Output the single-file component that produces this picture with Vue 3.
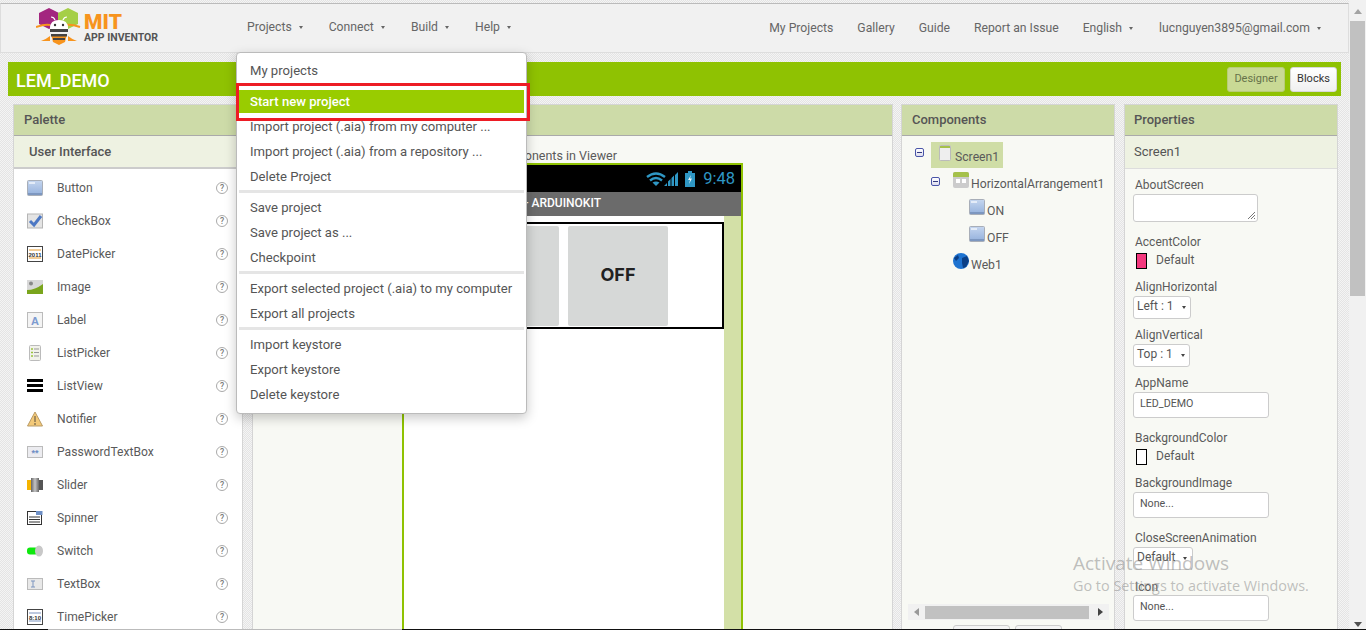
<script setup>
const nav = ['Projects', 'Connect', 'Build', 'Help']
const palette = ['Button','CheckBox','DatePicker','Image','Label','ListPicker','ListView','Notifier','PasswordTextBox','Slider','Spinner','Switch','TextBox','TimePicker']
const menu = [
  [{t:'My projects'},{t:'Start new project',on:true},{t:'Import project (.aia) from my computer ...'},{t:'Import project (.aia) from a repository ...'},{t:'Delete Project'}],
  [{t:'Save project'},{t:'Save project as ...'},{t:'Checkpoint'}],
  [{t:'Export selected project (.aia) to my computer'},{t:'Export all projects'}],
  [{t:'Import keystore'},{t:'Export keystore'},{t:'Delete keystore'}],
]
</script>

<template>
  <div class="page">
    <svg class="defs" width="0" height="0">
      <defs>
        <linearGradient id="btnGrad" x1="0" y1="0" x2="0" y2="1"><stop offset="0" stop-color="#c5d6ef"/><stop offset="1" stop-color="#93b0dc"/></linearGradient>
        <linearGradient id="sliderGrad" x1="0" y1="0" x2="1" y2="0"><stop offset="0" stop-color="#666"/><stop offset=".5" stop-color="#c4c4c4"/><stop offset="1" stop-color="#666"/></linearGradient>
      </defs>
    </svg>
    <div class="main">
      <nav class="nav">
        <div class="logo">
          <svg width="46" height="40" viewBox="0 0 46 40">
            <path d="M13 1l10 5v11l-10 5-10-5V6z" fill="#a3267f"/>
            <path d="M32 1l10 5v11l-10 5-10-5V6z" fill="#a5cf47"/>
            <path d="M0 20q9-3 14-2M44 20q-9-3-14-2" stroke="#f7941e" stroke-width="2" fill="none"/>
            <path d="M14 29q-5 4-9 5h9zM32 29q5 4 9 5h-9z" fill="#f7941e"/>
            <path d="M15 27h16l-2 8-6 3-6-3z" fill="#f7941e"/>
            <path d="M14 21q0-8 9-8t9 8v2H14z" fill="#fff"/>
            <path d="M14 22h18v3H14zM15 27h16v2.500H15zM17 31h12v2H17z" fill="#444"/>
            <circle cx="19" cy="18" r="1.200" fill="#333"/><circle cx="27" cy="18" r="1.200" fill="#333"/>
            <path d="M19 13q-1-3-4-3M27 13q1-3 4-3" stroke="#fff" stroke-width="1.200" fill="none"/>
          </svg>
          <div class="logotext"><span class="mit">MIT</span><span class="ai">APP INVENTOR</span></div>
        </div>
        <div class="navleft"><span v-for="n in nav" :key="n" class="navitem">{{ n }}<i class="caret"></i></span></div>
        <div class="navright">
          <span>My Projects</span><span>Gallery</span><span>Guide</span><span>Report an Issue</span>
          <span>English<i class="caret"></i></span>
          <span class="email">lucnguyen3895@gmail.com<i class="caret"></i></span>
        </div>
      </nav>

      <header class="bar">
        <strong>LEM_DEMO</strong>
        <div class="tabs"><span class="tab off">Designer</span><span class="tab on">Blocks</span></div>
      </header>

      <div class="work">
        <section class="panel palette">
          <h3>Palette</h3>
          <div class="sub">User Interface</div>
          <ul class="plist">
            <li v-for="p in palette" :key="p">
              <svg class="pi" width="16" height="16" viewBox="0 0 16 16">
                <template v-if="p==='Button'"><rect x=".5" y=".5" width="15" height="15" rx="1" fill="url(#btnGrad)" stroke="#a8aeb8"/><rect x="1" y="13" width="14" height="2" fill="#7d97c0"/><rect x="2" y="2" width="6" height="2" fill="#e4ecf8"/></template>
                <template v-else-if="p==='CheckBox'"><rect x=".5" y="1" width="15" height="14" fill="#e4e4e4" stroke="#b5b5b5"/><path d="M3 8l4 4 7-9" stroke="#4d78c4" stroke-width="3" fill="none"/></template>
                <template v-else-if="p==='DatePicker'"><rect x=".5" y=".5" width="15" height="15" fill="#fff" stroke="#444"/><path d="M2 4h12M2 12h12" stroke="#e69a2e"/><text x="8" y="10.500" text-anchor="middle" class="svgt">2011</text></template>
                <template v-else-if="p==='Image'"><rect y="1" width="16" height="14" fill="#d8d8d8"/><circle cx="4" cy="4.500" r="2" fill="#888"/><path d="M0 11q8 0 16-6v10H0z" fill="#7aa51c"/></template>
                <template v-else-if="p==='Label'"><rect x=".5" y=".5" width="15" height="15" fill="#f4f4f4" stroke="#bbb"/><text x="8" y="12.500" text-anchor="middle" class="svgA">A</text></template>
                <template v-else-if="p==='ListPicker'"><rect x="2.500" y=".5" width="11" height="15" rx="1" fill="#f2f2ea" stroke="#bbb"/><path d="M4 4h2M4 7.500h2M4 11h2" stroke="#9ac43c" stroke-width="1.500"/><path d="M7 4h5M7 7.500h5M7 11h5" stroke="#999"/></template>
                <template v-else-if="p==='ListView'"><path d="M0 1h16v3H0zM0 6h16v3H0zM0 11h16v3H0z" fill="#000"/></template>
                <template v-else-if="p==='Notifier'"><path d="M8 1l7.500 14H.5z" fill="#f3c978" stroke="#b99b66"/><path d="M8 5v6M8 12v2" stroke="#8a7650" stroke-width="1.500"/></template>
                <template v-else-if="p==='PasswordTextBox'"><rect x=".5" y="2.500" width="15" height="11" fill="#ececf0" stroke="#bbb"/><text x="8" y="12" text-anchor="middle" class="svgS">**</text></template>
                <template v-else-if="p==='Slider'"><rect y="3" width="5" height="10" fill="#f5b400"/><rect x="4" y="1" width="8" height="14" fill="url(#sliderGrad)"/><rect x="12" y="3" width="4" height="10" fill="#555"/></template>
                <template v-else-if="p==='Spinner'"><rect x=".5" y="1.500" width="14" height="13" fill="#fff" stroke="#333"/><rect x="9" y="1" width="6.500" height="4" fill="#6e8fc5"/><path d="M2 7h11M2 9.500h11M2 12h11" stroke="#333"/></template>
                <template v-else-if="p==='Switch'"><rect y="4.500" width="11" height="7" rx="3" fill="#0ee80e"/><ellipse cx="12" cy="8" rx="4" ry="5.500" fill="#c8c8c8"/></template>
                <template v-else-if="p==='TextBox'"><rect x=".5" y="2.500" width="15" height="11" fill="#e8e8e8" stroke="#bbb"/><path d="M4 5h4M4 11h4M6 5v6" stroke="#7c95bf"/></template>
                <template v-else><rect x=".5" y=".5" width="15" height="15" fill="#fff" stroke="#444"/><path d="M2 4h12M2 12h12" stroke="#7c95bf"/><text x="8" y="10.500" text-anchor="middle" class="svgt">8:10</text></template>
              </svg>
              <span class="pn">{{ p }}</span>
              <span class="help">?</span>
            </li>
          </ul>
        </section>

        <section class="panel viewer">
          <h3>Viewer</h3>
          <div class="vbody">
            <label class="chk">Display hidden components in Viewer</label>
            <div class="phone">
              <div class="status">
                <svg class="sig" width="32" height="14" viewBox="0 0 32 14"><path d="M1 5Q10-2 19 5M4 8.500Q10 3.500 16 8.500" stroke="#2f97c4" stroke-width="2.400" fill="none"/><path d="M6.500 10.500Q10 8.500 13.500 10.500L10 14z" fill="#2f97c4"/><path d="M18 14l3-3v3zM22 14V9.500L24.500 7v7zM25.500 14V6L28 3.500V14zM29 14V3l3-3v14z" fill="#2f97c4"/></svg>
                <svg class="bat" width="10" height="16" viewBox="0 0 10 16"><path d="M3 0h4v2h3v14H0V2h3z" fill="#2f97c4"/><path d="M6 4L3 9h2l-1 4 3-5.500H5z" fill="#eaf6fb"/></svg>
                <span class="clock">9:48</span>
              </div>
              <div class="title">LED DEMO - ARDUINOKIT</div>
              <div class="screen">
                <div class="content">
                  <div class="arr"><div class="btn">ON</div><div class="btn">OFF</div></div>
                </div>
                <div class="sbar"></div>
              </div>
            </div>
          </div>
        </section>

        <section class="panel comps">
          <h3>Components</h3>
          <div class="tree">
            <div class="node">
              <i class="tog"></i>
              <span class="sel">
                <svg width="12" height="16" viewBox="0 0 12 16"><rect x=".5" y=".5" width="11" height="15" rx="1" fill="#eee" stroke="#bbb"/><rect x="1" y="1" width="10" height="2" fill="#a5c14a"/></svg>
                <span>Screen1</span>
              </span>
            </div>
            <div class="node l1">
              <i class="tog"></i>
              <svg class="ti" width="16" height="16" viewBox="0 0 16 16"><rect width="16" height="16" rx="2" fill="#ccc"/><path d="M0 2a2 2 0 0 1 2-2h12a2 2 0 0 1 2 2v3H0z" fill="#a5c14a"/><rect x="3" y="7" width="4" height="4" fill="#fff"/><rect x="9" y="7" width="4" height="4" fill="#fff"/></svg>
              <span>HorizontalArrangement1</span>
            </div>
            <div class="node l2">
              <svg class="ti" width="16" height="16" viewBox="0 0 16 16"><rect x=".5" y=".5" width="15" height="15" rx="1" fill="url(#btnGrad)" stroke="#a8aeb8"/><rect x="1" y="13" width="14" height="2" fill="#7d97c0"/><rect x="2" y="2" width="6" height="2" fill="#e4ecf8"/></svg>
              <span>ON</span>
            </div>
            <div class="node l2">
              <svg class="ti" width="16" height="16" viewBox="0 0 16 16"><rect x=".5" y=".5" width="15" height="15" rx="1" fill="url(#btnGrad)" stroke="#a8aeb8"/><rect x="1" y="13" width="14" height="2" fill="#7d97c0"/><rect x="2" y="2" width="6" height="2" fill="#e4ecf8"/></svg>
              <span>OFF</span>
            </div>
            <div class="node l3">
              <svg class="ti" width="16" height="16" viewBox="0 0 16 16"><circle cx="8" cy="8" r="8" fill="#1e73d0"/><path d="M9 5l5-2 2 5-3 6-3 1-1-5zM1 5l4-3 1 3-3 3z" fill="#0b3f86"/></svg>
              <span>Web1</span>
            </div>
          </div>
          <div class="hscroll">
            <i class="al"></i><div class="hthumb"></div><i class="ar"></i>
          </div>
          <div class="cbtns"><span class="cb c1"></span><span class="cb c2"></span></div>
        </section>

        <section class="panel props">
          <h3>Properties</h3>
          <div class="sub plain">Screen1</div>
          <div class="plist2">
            <div class="prop p1"><label>AboutScreen</label>
              <div class="ta"><svg width="9" height="9" viewBox="0 0 9 9"><path d="M1 8l7-7M4 8l4-4M7 8l1-1" stroke="#555" stroke-width=".8"/></svg></div></div>
            <div class="prop p2"><label>AccentColor</label><div class="col"><i class="sw pink"></i>Default</div></div>
            <div class="prop p3"><label>AlignHorizontal</label><div class="sel2 w58">Left : 1<i class="caret dk"></i></div></div>
            <div class="prop p4"><label>AlignVertical</label><div class="sel2 w57">Top : 1<i class="caret dk"></i></div></div>
            <div class="prop p5"><label>AppName</label><div class="inp">LED_DEMO</div></div>
            <div class="prop p6"><label>BackgroundColor</label><div class="col"><i class="sw"></i>Default</div></div>
            <div class="prop p7"><label>BackgroundImage</label><div class="inp">None...</div></div>
            <div class="prop p8"><label>CloseScreenAnimation</label><div class="sel2 w60">Default<i class="caret dk"></i></div></div>
            <div class="prop p9"><label>Icon</label><div class="inp icon">None...</div></div>
          </div>
        </section>
      </div>
    </div>

    <aside class="vscroll">
      <i class="up"></i><div class="vthumb"></div><i class="dn"></i>
    </aside>

    <div class="menu">
      <template v-for="(g, i) in menu" :key="i">
        <div v-if="i" class="sep"></div>
        <div v-for="m in g" :key="m.t" class="mi" :class="{ on: m.on }">{{ m.t }}</div>
      </template>
    </div>
    <div class="redbox"></div>

    <div class="wm"><div class="w1">Activate Windows</div><div class="w2">Go to Settings to activate Windows.</div></div>
    <div class="blackline"></div>
  </div>
</template>

<style>
html, body { margin: 0; overflow: hidden; background: #fff; }
</style>

<style scoped>
.page { position: relative; display: flex; width: 1366px; height: 630px; overflow: hidden; font-family: Roboto, "Liberation Sans", sans-serif; font-size: 13px; color: #5a5a5a; background: #fff; }
.defs { position: absolute; }
.main { width: 1349px; height: 630px; flex: none; padding-top: 3px; box-sizing: border-box; background: repeating-conic-gradient(#e4e4e4 0 25%, #f4f4f4 0 50%) 0 0 / 2px 2px; overflow: hidden; }
.nav { height: 50px; box-sizing: border-box; background: #f1f1f1; border-top: 1px solid #bbb; border-bottom: 1px solid #ddd; border-right: 1px solid #ddd; border-left: 1px solid #ddd; display: flex; align-items: center; color: #666; font-size: 12.200px; }
.logo { display: flex; align-items: flex-start; width: 246px; flex: none; padding-left: 35px; box-sizing: border-box; height: 40px; margin-top: -3px; }
.logotext { display: flex; flex-direction: column; margin-left: 2px; margin-top: 5px; }
.mit { font-weight: 900; font-size: 21px; line-height: 20px; color: #f7941e; letter-spacing: .2px; }
.ai { font-weight: 700; font-size: 10.500px; line-height: 12px; color: #555; }
.navleft { display: flex; margin-top: -2px; }
.navitem { display: inline-flex; align-items: center; margin-right: 26px; }
.caret { display: inline-block; margin-left: 7px; border: 2.500px solid transparent; border-top: 3px solid #666; border-bottom: 0; vertical-align: middle; }
.caret.dk { border-top-color: #444; margin-left: 8px; }
.navright { margin-left: auto; display: flex; gap: 24px; padding-right: 27px; align-items: center; }
.navright span { white-space: nowrap; }
.navright .email { margin-left: 2px; }
.bar { margin: 9px 8px 0 8px; height: 34px; background: #8fc202; display: flex; align-items: center; justify-content: space-between; padding: 0 4px 0 8px; }
.bar strong { color: #fff; font-size: 18px; font-weight: 500; margin-top: 2px; }
.tabs { display: flex; gap: 5px; }
.tab { font-size: 11px; box-sizing: border-box; text-align: center; border: 1px solid #d8d8d8; border-radius: 3px; height: 25px; line-height: 22px; }
.tab.on { width: 47px; color: #333; background: linear-gradient(#fff, #f0f0f0); }
.tab.off { width: 58px; background: #c9d995; color: #66724a; border-color: #b8cc78; }
.work { display: flex; margin: 8px 0 0 13px; height: 540px; }
.panel { background: #f8f9f4; border: 1px solid #d5d5d5; box-sizing: border-box; height: 540px; flex: none; position: relative; overflow: hidden; }
.panel h3 { margin: 0; height: 30px; line-height: 30px; padding-left: 10px; background: #cddba8; color: #555; font-size: 13px; font-weight: 500; border-bottom: 1px solid #aaa; }
.palette { width: 230px; margin-right: 9px; }
.viewer { width: 641px; margin-right: 8px; }
.comps { width: 214px; margin-right: 9px; }
.props { width: 214px; }
.props h3 { padding-left: 9px; }
.sub { height: 31px; line-height: 31px; background: #eef2e2; padding-left: 15px; font-weight: 500; color: #555; border-bottom: 2px solid #ccc; }
.sub.plain { padding-left: 9px; font-weight: 400; color: #555; border-bottom: 1px solid #ddd; height: 32px; line-height: 32px; }
.plist { list-style: none; margin: 0; padding: 2px 0 0; background: #fff; height: 500px; }
.plist li { display: flex; align-items: center; height: 33px; padding-left: 13px; font-size: 12.100px; }
.pi { flex: none; }
.pn { margin-left: 14px; }
.help { margin-left: auto; margin-right: 14px; width: 10px; height: 10px; border: 1px solid #aaa; border-radius: 50%; font-size: 8.500px; line-height: 10px; text-align: center; color: #777; font-weight: 500; }
.svgt { font: 700 6px "Liberation Sans Narrow", "Liberation Sans", sans-serif; fill: #333; }
.svgA { font: 700 11px "Liberation Sans", sans-serif; fill: #7c9bd0; }
.svgS { font: 700 9px "Liberation Sans", sans-serif; fill: #6e8fc5; }
.vbody { position: relative; height: 500px; }
.chk { position: absolute; left: 156px; top: 12px; font-size: 12.500px; white-space: nowrap; }
.phone { position: absolute; left: 149px; top: 27px; width: 341px; height: 480px; box-sizing: border-box; background: #fff; border: solid #8fc202; border-width: 2px 2px 0 2px; }
.status { height: 27px; background: #000; display: flex; align-items: center; justify-content: flex-end; padding-right: 6px; }
.sig { margin-right: 7px; }
.bat { margin-right: 8px; }
.clock { color: #2f97c4; font-size: 16.500px; }
.title { height: 24px; line-height: 22px; background: #6b6b6b; color: #fff; font-size: 12px; font-weight: 500; padding-right: 140px; text-align: right; white-space: nowrap; overflow: hidden; }
.screen { display: flex; height: 420px; }
.content { flex: 1; padding-top: 6px; }
.sbar { width: 17px; background: #d3e0a7; }
.arr { height: 107px; box-sizing: border-box; border: 2px solid #000; display: flex; gap: 9px; padding: 2px 0 0 62px; }
.btn { width: 91px; height: 100px; padding-bottom: 3px; box-sizing: border-box; background: #d6d8d7; border-radius: 2px; display: flex; align-items: center; justify-content: center; color: #222; font-weight: 700; font-size: 18px; font-family: Inter, "Open Sans", sans-serif; }
.btn:last-child { width: 100px; }
.tree { padding-top: 5px; font-size: 12.200px; height: 465px; position: relative; box-sizing: border-box; }
.node { display: flex; align-items: center; height: 27px; }
.node > span { white-space: nowrap; }
.tog { width: 7px; height: 7px; border: 1px solid #4a55a8; border-radius: 2px; background: linear-gradient(#fff, #dde); position: relative; margin: -5px 0 0 13px; flex: none; }
.tog::after { content: ""; position: absolute; left: 1px; right: 1px; top: 3px; height: 1px; background: #333a80; }
.sel { display: flex; align-items: flex-end; background: #cfdda6; width: 72px; height: 26px; padding: 0 0 4px 8px; margin-left: 7px; box-sizing: border-box; gap: 4px; }
.sel svg { margin-bottom: 3px; }
.l1 { margin-top: 2px; }
.l1 .tog { margin-left: 29px; }
.l1 .ti { margin-left: 13px; margin-right: 2px; }
.l2 .ti { margin-left: 67px; margin-right: 2px; }
.l3 .ti { margin-left: 51px; margin-right: 2px; }
.ti { flex: none; margin-top: -7px; }
.hscroll { position: absolute; left: 6px; right: 5px; top: 499px; height: 16px; background: #f1f1f1; display: flex; align-items: center; }
.hthumb { flex: none; margin-left: 6px; width: 164px; height: 13px; background: #c1c1c1; }
.al { margin-left: 6px; border: 4px solid transparent; border-left: 0; border-right: 5px solid #999; }
.ar { margin-left: 9px; border: 4px solid transparent; border-right: 0; border-left: 5px solid #444; }
.cbtns { position: absolute; top: 520px; left: 51px; display: flex; gap: 5px; }
.cb { display: block; height: 20px; background: #f4f4f4; border: 1px solid #ccc; border-radius: 3px; box-sizing: border-box; }
.c1 { width: 57px; }
.c2 { width: 47px; }
.plist2 { padding-left: 8px; font-size: 12px; }
.prop label { display: block; line-height: 14px; margin-left: 2px; }
.p1 { padding-top: 9px; }
.p2 { padding-top: 13px; }
.p3 { padding-top: 11px; }
.p4 { padding-top: 9px; }
.p5 { padding-top: 9px; }
.p6 { padding-top: 13px; }
.p7 { padding-top: 11px; }
.p8 { padding-top: 13px; }
.p9 { padding-top: 10px; }
.ta { position: relative; width: 123px; height: 26px; margin-top: 2px; background: #fff; border: 1px solid #ccc; border-radius: 3px; }
.ta svg { position: absolute; right: 1px; bottom: 1px; }
.col { display: flex; align-items: flex-start; height: 16px; line-height: 14px; margin-top: 4px; margin-left: 3px; }
.sw { width: 9px; height: 14px; border: 1px solid #000; margin-right: 9px; background: #fff; flex: none; }
.sw.pink { background: #f4387e; }
.sel2 { display: flex; align-items: center; box-sizing: border-box; height: 23px; margin-top: 2px; padding: 0 0 3px 3px; background: #fff; border: 1px solid #ccc; border-radius: 3px; color: #555; }
.sel2 .caret { margin-top: 3px; }
.w58 { width: 58px; }
.w57 { width: 57px; }
.w60 { width: 60px; }
.inp { box-sizing: border-box; width: 136px; height: 26px; line-height: 22px; margin-top: 2px; padding-left: 6px; background: #fff; border: 1px solid #ccc; border-radius: 3px; font-size: 10.700px; color: #555; }
.inp.icon { margin-top: 1px; }
.vscroll { flex: 1; background: #f1f1f1; position: relative; display: flex; flex-direction: column; align-items: center; }
.vthumb { width: 15px; height: 275px; background: #c1c1c1; margin-top: 7px; }
.up { margin-top: 9px; border: 4px solid transparent; border-top: 0; border-bottom: 5px solid #a3a3a3; }
.dn { position: absolute; bottom: 3px; border: 4px solid transparent; border-bottom: 0; border-top: 5px solid #505050; }
.menu { position: absolute; left: 236px; top: 52px; width: 291px; box-sizing: border-box; height: 362px; padding: 5px 2px 0; background: #fff; border: 1px solid #bbb; border-radius: 4px; box-shadow: 0 4px 12px rgba(0,0,0,.22); }
.mi { height: 25px; line-height: 25px; padding-left: 11px; white-space: nowrap; color: #555; font-size: 13.100px; }
.mi.on { background: #99cc00; color: #fff; height: 23px; line-height: 23px; margin: 7px 0 1px; font-weight: 500; }
.sep { height: 3px; margin: 1px 0 2px; background: #e5e5e5; }
.redbox { position: absolute; left: 236px; top: 83px; width: 294px; height: 38px; box-sizing: border-box; border: 3px solid #ed1c24; }
.wm { position: absolute; left: 1073px; top: 551px; color: rgba(140,140,140,.55); font-family: "Open Sans", sans-serif; white-space: nowrap; }
.w1 { font-size: 19px; line-height: 25px; }
.w2 { font-size: 14.400px; line-height: 20px; }
.blackline { position: absolute; left: 0; right: 0; bottom: 0; height: 1px; background: linear-gradient(90deg, #111 48px, #bbb 48px, #bbb 402px, #111 402px); }
</style>
